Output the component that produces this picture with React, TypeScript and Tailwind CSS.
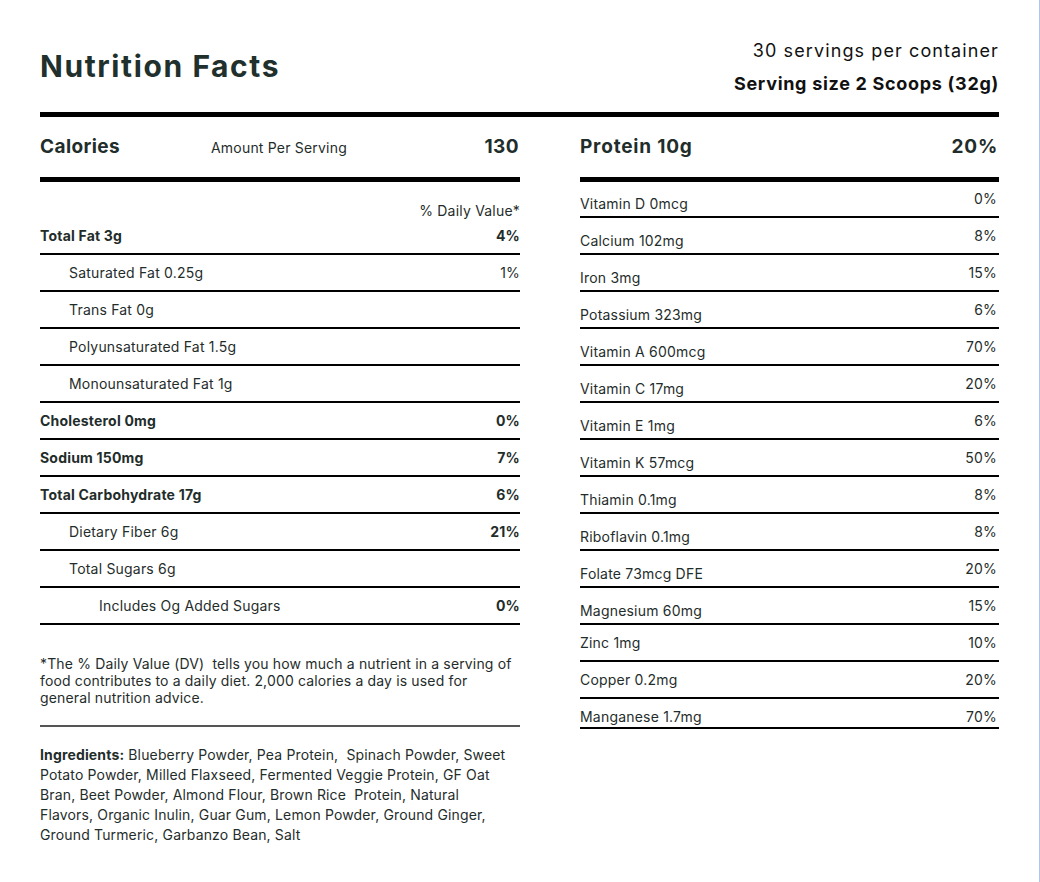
import React from 'react';

type Row = { label: string; pct?: string; bold?: boolean; pctBold?: boolean; indent?: 0 | 1 | 2 };

const LEFT_ROWS: Row[] = [
  { label: 'Saturated Fat 0.25g', pct: '1%', indent: 1 },
  { label: 'Trans Fat 0g', indent: 1 },
  { label: 'Polyunsaturated Fat 1.5g', indent: 1 },
  { label: 'Monounsaturated Fat 1g', indent: 1 },
  { label: 'Cholesterol 0mg', pct: '0%', bold: true, pctBold: true },
  { label: 'Sodium 150mg', pct: '7%', bold: true, pctBold: true },
  { label: 'Total Carbohydrate 17g', pct: '6%', bold: true, pctBold: true },
  { label: 'Dietary Fiber 6g', pct: '21%', indent: 1, pctBold: true },
  { label: 'Total Sugars 6g', indent: 1 },
  { label: 'Includes Og Added Sugars', pct: '0%', indent: 2, pctBold: true },
];

// "raised" rows have the percentage sitting a few px above the label
const RIGHT_ROWS: { label: string; pct: string; raised?: boolean }[] = [
  { label: 'Vitamin D 0mcg', pct: '0%', raised: true },
  { label: 'Calcium 102mg', pct: '8%', raised: true },
  { label: 'Iron 3mg', pct: '15%', raised: true },
  { label: 'Potassium 323mg', pct: '6%', raised: true },
  { label: 'Vitamin A 600mcg', pct: '70%', raised: true },
  { label: 'Vitamin C 17mg', pct: '20%', raised: true },
  { label: 'Vitamin E 1mg', pct: '6%', raised: true },
  { label: 'Vitamin K 57mcg', pct: '50%', raised: true },
  { label: 'Thiamin 0.1mg', pct: '8%', raised: true },
  { label: 'Riboflavin 0.1mg', pct: '8%', raised: true },
  { label: 'Folate 73mcg DFE', pct: '20%', raised: true },
  { label: 'Magnesium 60mg', pct: '15%', raised: true },
  { label: 'Zinc 1mg', pct: '10%' },
  { label: 'Copper 0.2mg', pct: '20%' },
];

const indentClass = (i?: number) => (i === 2 ? 'pl-[59px]' : i === 1 ? 'pl-[29px]' : 'pl-0');

export default function App() {
  return (
    <div className="w-[1040px] h-[882px] bg-white border-r border-[#a9c9ec] pl-10 pr-10 text-[#1f2d2b] tracking-[0.2px] font-['Inter',sans-serif]">
      {/* header */}
      <div className="flex justify-between items-start pt-[34px] h-[112px]">
        <h1 className="mt-[14px] text-[30px] leading-[36px] font-bold tracking-[1.6px] text-[#1f302d]">Nutrition Facts</h1>
        <div className="text-right text-[18px] leading-[33px] text-[#111]">
          <p className="tracking-[1.1px]">30 servings per container</p>
          <p className="font-bold tracking-[0.7px]">Serving size 2 Scoops (32g)</p>
        </div>
      </div>
      <div className="h-[5px] bg-black" />

      <div className="flex gap-[60px]">
        {/* left column */}
        <div className="w-[480px] shrink-0">
          <div className="h-[60px] flex items-center">
            <span className="w-[171px] text-[19px] font-bold tracking-[0.4px]">Calories</span>
            <span className="flex-1 text-[14px]">Amount Per Serving</span>
            <span className="text-[19px] font-bold tracking-[0.4px] pr-[1px]">130</span>
          </div>
          <div className="h-[5px] bg-black" />
          <div className="h-[39px] pt-[19px] text-right text-[14px] leading-[20px]">% Daily Value*</div>
          <div className="h-[34px] pt-[5px] border-b-2 border-black flex justify-between text-[14px] leading-[20px] font-bold">
            <span>Total Fat 3g</span>
            <span>4%</span>
          </div>
          {LEFT_ROWS.map((r) => (
            <div
              key={r.label}
              className="h-[37px] pt-[8px] border-b-2 border-black flex justify-between text-[14px] leading-[20px]"
            >
              <span className={`${indentClass(r.indent)} ${r.bold ? 'font-bold' : ''}`}>{r.label}</span>
              {r.pct && <span className={r.pctBold ? 'font-bold' : ''}>{r.pct}</span>}
            </div>
          ))}

          <p className="mt-[30px] text-[14px] leading-[17px] tracking-[0.15px]">
            *The % Daily Value (DV)&nbsp; tells you how much a nutrient in a serving of
            <br />
            food contributes to a daily diet. 2,000 calories a day is used for
            <br />
            general nutrition advice.
          </p>
          <div className="mt-[19px] h-[2px] bg-[#555]" />
          <p className="mt-[18px] text-[14px] leading-[20px] tracking-[0.15px] whitespace-nowrap">
            <span className="font-bold">Ingredients:</span> Blueberry Powder, Pea Protein,&nbsp; Spinach Powder, Sweet
            <br />
            Potato Powder, Milled Flaxseed, Fermented Veggie Protein, GF Oat
            <br />
            Bran, Beet Powder, Almond Flour, Brown Rice&nbsp; Protein, Natural
            <br />
            Flavors, Organic Inulin, Guar Gum, Lemon Powder, Ground Ginger,
            <br />
            Ground Turmeric, Garbanzo Bean, Salt
          </p>
        </div>

        {/* right column */}
        <div className="flex-1">
          <div className="h-[60px] flex items-center justify-between text-[19px] font-bold tracking-[0.8px]">
            <span>Protein 10g</span>
            <span className="pr-[1px]">20%</span>
          </div>
          <div className="h-[5px] bg-black" />
          {RIGHT_ROWS.map((r, i) => (
            <div
              key={r.label}
              className={`${i === 0 ? 'h-[36px]' : 'h-[37px]'} border-b-2 border-black flex justify-between items-start text-[14px] leading-[20px]`}
            >
              <span className={r.raised ? (i === 0 ? 'mt-[12px]' : 'mt-[13px]') : 'mt-[8px]'}>{r.label}</span>
              <span className={`${i === 0 ? 'mt-[7px]' : 'mt-[8px]'} pr-[2px]`}>{r.pct}</span>
            </div>
          ))}
          <div className="h-[30px] border-b-2 border-black flex justify-between items-start text-[14px] leading-[20px]">
            <span className="mt-[8px]">Manganese 1.7mg</span>
            <span className="mt-[8px] pr-[2px]">70%</span>
          </div>
        </div>
      </div>
    </div>
  );
}
